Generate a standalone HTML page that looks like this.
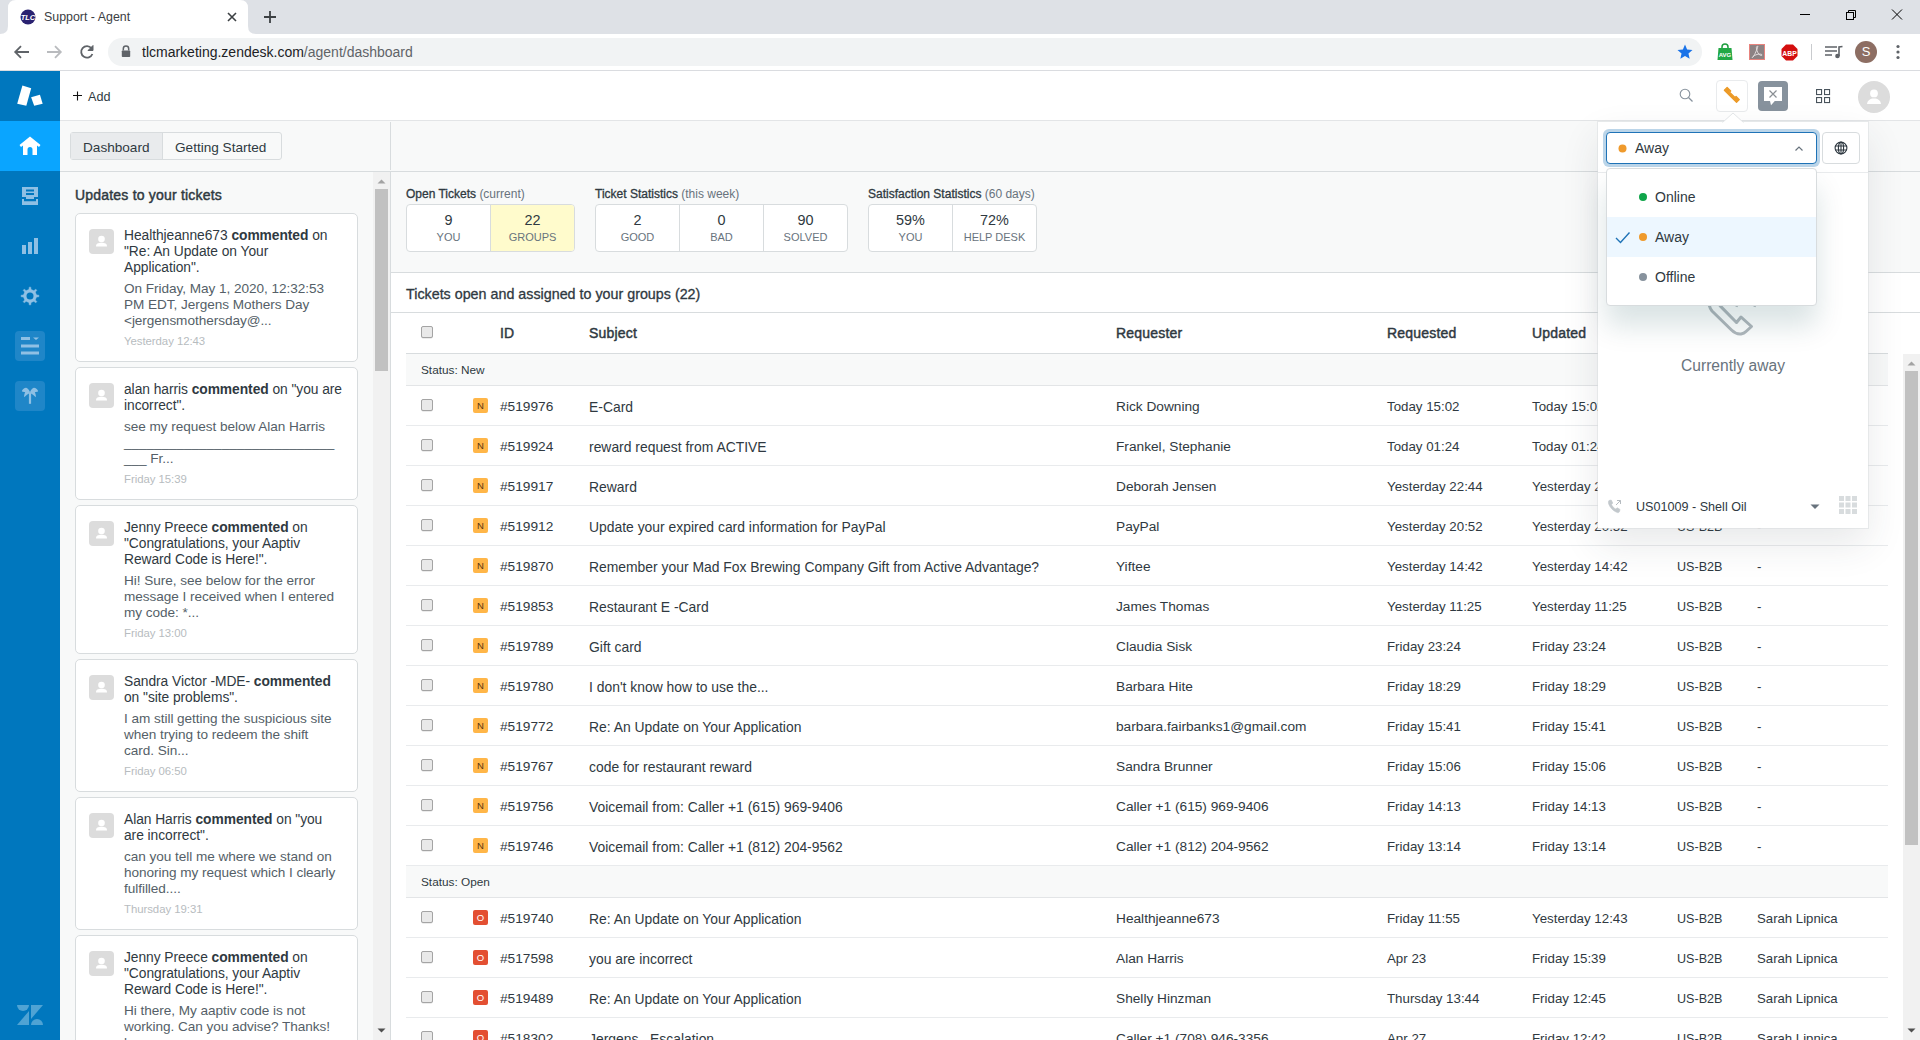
<!DOCTYPE html>
<html><head><meta charset="utf-8">
<style>
*{box-sizing:border-box;margin:0;padding:0}
html,body{width:1920px;height:1040px;overflow:hidden;background:#fff;font-family:"Liberation Sans",sans-serif;color:#2f3941}
.a{position:absolute}
/* browser chrome */
#tabbar{left:0;top:0;width:1920px;height:34px;background:#dee1e6}
#tab{left:8px;top:0;width:240px;height:34px;background:#fff;border-radius:8px 8px 0 0}
#addr{left:0;top:34px;width:1920px;height:37px;background:#fff;border-bottom:1px solid #dadce0}
#pill{left:108px;top:38px;width:1594px;height:28px;border-radius:14px;background:#f1f3f4}
/* zendesk */
#nav{left:0;top:71px;width:60px;height:969px;background:#0077be}
#home{left:0;top:121px;width:60px;height:50px;background:#0aa5ff}
#topbar{left:60px;top:71px;width:1860px;height:50px;background:#fff;border-bottom:1px solid #e3e5e7}
#sub{left:60px;top:121px;width:1860px;height:51px;background:#f8f9f9;border-bottom:1px solid #d8dcde}
#left{left:60px;top:172px;width:331px;height:868px;background:#f8f9f9;border-right:1px solid #d8dcde}
#main{left:391px;top:172px;width:1529px;height:868px;background:#fff}
.card{position:absolute;left:75px;width:283px;background:#fff;border:1px solid #d8dcde;border-radius:5px;padding:14px 10px 12px 48px}
.card .av{position:absolute;left:13px;top:15px;width:25px;height:25px;background:#dcdcdc;border-radius:4px}
.card .av svg{display:block}
.card .tx{font-size:13.8px;line-height:16px;color:#2f3941;white-space:nowrap;letter-spacing:-0.05px}
.card .tx b{font-weight:700}
.card .bd{margin-top:4.5px;color:#555f68;font-size:13.6px;line-height:16px}
.card .dt{margin-top:4.6px;color:#b7bcc0;font-size:11.4px;line-height:16px}
.lbl{font-size:12px;line-height:14px;color:#2f3941;white-space:nowrap;-webkit-text-stroke:0.3px #2f3941}
.lbl span{color:#68737d;-webkit-text-stroke:0}
.sbox{height:48px;border:1px solid #d8dcde;border-radius:4px;background:#fff;display:flex;overflow:hidden}
.sbox .cell{height:46px;border-right:1px solid #d8dcde;text-align:center;font-size:14.4px;line-height:16px;padding-top:7px;color:#2f3941}
.sbox .cell small{display:block;font-size:11px;line-height:16px;color:#68737d;margin-top:1px}
.th{top:325px;font-size:14px;line-height:16px;font-weight:400;color:#2f3941;white-space:nowrap;-webkit-text-stroke:0.45px #2f3941;letter-spacing:0.2px}
.cb{width:12px;height:12px;border:1px solid #a4a4a4;border-radius:2px;background:#e9e9e9;box-shadow:0 0.5px 0.5px rgba(0,0,0,0.15)}
.srow{left:406px;width:1482px;height:32px;background:#f8f9f9;border-bottom:1px solid #e3e5e7;padding:8px 0 0 15px;font-size:11.8px;line-height:16px;color:#2f3941}
.tr{left:406px;width:1482px;height:40px;border-bottom:1px solid #e9ebed}
.td{font-size:13.8px;line-height:16px;color:#2f3941;white-space:nowrap}
.badge{left:473px;width:15px;height:15px;border-radius:2px;font-size:9.5px;line-height:15px;text-align:center;font-weight:400}
.bn{background:#ffb648;color:#5a3512}
.bo{background:#e34f32;color:#fff}
</style></head><body>
<div id="tabbar" class="a"></div>
<div id="addr" class="a"></div>
<div id="pill" class="a"></div>

<!-- tab -->
<svg class="a" style="left:0;top:0" width="260" height="34">
 <path d="M0 34 Q8 34 8 26 V8 Q8 0 16 0 H240 Q248 0 248 8 V26 Q248 34 256 34 Z" fill="#fff"/>
</svg>
<svg class="a" style="left:20px;top:9px" width="16" height="16" viewBox="0 0 16 16"><circle cx="8" cy="8" r="7.5" fill="#2a2271"/><text x="8" y="10.8" font-family="Liberation Sans" font-size="7.5" font-weight="700" font-style="italic" fill="#fff" text-anchor="middle">TLC</text></svg>
<div class="a" style="left:44px;top:9px;font-size:12.4px;color:#3c4043;white-space:nowrap;line-height:16px">Support - Agent</div>
<svg class="a" style="left:227px;top:12px" width="10" height="10"><path d="M1 1L9 9M9 1L1 9" stroke="#3c4043" stroke-width="1.6"/></svg>
<svg class="a" style="left:263px;top:10px" width="14" height="14"><path d="M7 1V13M1 7H13" stroke="#3c4043" stroke-width="1.8"/></svg>
<svg class="a" style="left:1799px;top:9px" width="120" height="12">
 <path d="M1 5.5H11" stroke="#000" stroke-width="1"/>
 <rect x="47.5" y="3.5" width="7" height="7" fill="none" stroke="#000"/>
 <path d="M49.5 3.5V1.5H56.5V8.5H54.5" fill="none" stroke="#000"/>
 <path d="M93 0.5L103 10.5M103 0.5L93 10.5" stroke="#000"/>
</svg>
<!-- address row -->
<svg class="a" style="left:13px;top:44px" width="90" height="16" viewBox="0 0 90 16">
 <path d="M16 8H2.5M8 2.2L2.2 8L8 13.8" fill="none" stroke="#5f6368" stroke-width="1.8"/>
 <path d="M34 8H47.5M42 2.2L47.8 8L42 13.8" fill="none" stroke="#b9bbbe" stroke-width="1.8"/>
 <path d="M78.5 4.2A5.8 5.8 0 1 0 79.4 10" fill="none" stroke="#5f6368" stroke-width="1.8"/>
 <path d="M80 1.5V6.5H75Z" fill="#5f6368" stroke="#5f6368" stroke-width="1"/>
</svg>
<svg class="a" style="left:121px;top:45px" width="10" height="13" viewBox="0 0 10 13"><path d="M2.3 5.5V3.8A2.7 2.7 0 0 1 7.7 3.8V5.5" fill="none" stroke="#5f6368" stroke-width="1.5"/><rect x="0.8" y="5.5" width="8.4" height="6.6" rx="0.8" fill="#5f6368"/></svg>
<div class="a" style="left:142px;top:44px;font-size:14px;line-height:16px;white-space:nowrap;color:#202124">tlcmarketing.zendesk.com<span style="color:#5f6368">/agent/dashboard</span></div>
<svg class="a" style="left:1676px;top:43px" width="18" height="18" viewBox="0 0 24 24"><path d="M12 17.3l6.2 3.7-1.6-7 5.4-4.7-7.2-.6L12 2 9.2 8.6 2 9.3l5.4 4.7-1.6 7z" fill="#1a73e8"/></svg>
<svg class="a" style="left:1717px;top:43px" width="16" height="18" viewBox="0 0 16 18"><path d="M5 5V4A3 3 0 0 1 11 4V5" fill="none" stroke="#1e9e3e" stroke-width="1.5"/><path d="M1.5 5H14.5L15.5 17H0.5Z" fill="#22a845"/><text x="8" y="13.5" font-family="Liberation Sans" font-size="6" font-weight="700" fill="#fff" text-anchor="middle">AVG</text></svg>
<svg class="a" style="left:1749px;top:44px" width="16" height="16" viewBox="0 0 16 16"><rect x="0.5" y="0.5" width="15" height="15" fill="#8c8283" stroke="#e8837d"/><path d="M8 2.5C6.8 2.5 7.5 6 9 9C10.5 11.5 13 12 13 11S10 9.8 7 10.8S2.5 14 3.5 13.5S6.5 9 8 5S8.8 2.5 8 2.5Z" fill="none" stroke="#e9e3e3" stroke-width="0.9"/></svg>
<svg class="a" style="left:1781px;top:44px" width="17" height="17" viewBox="0 0 17 17"><path d="M5 0.5H12L16.5 5V12L12 16.5H5L0.5 12V5Z" fill="#d40e0e"/><text x="8.5" y="11.6" font-family="Liberation Sans" font-size="6.8" font-weight="700" fill="#fff" text-anchor="middle">ABP</text></svg>
<div class="a" style="left:1811px;top:44px;width:1px;height:16px;background:#c9cbce"></div>
<svg class="a" style="left:1825px;top:45px" width="18" height="14" viewBox="0 0 18 14"><path d="M0 2H12M0 6H12M0 10H7" stroke="#5f6368" stroke-width="1.6"/><path d="M14 11V2L17.5 1.5" fill="none" stroke="#5f6368" stroke-width="1.6"/><circle cx="12.5" cy="11" r="2.3" fill="#5f6368"/></svg>
<div class="a" style="left:1855px;top:41px;width:22px;height:22px;border-radius:11px;background:#8d6e63;color:#fff;font-size:13px;line-height:22px;text-align:center">S</div>
<svg class="a" style="left:1895px;top:44px" width="6" height="16"><circle cx="3" cy="2.5" r="1.6" fill="#5f6368"/><circle cx="3" cy="8" r="1.6" fill="#5f6368"/><circle cx="3" cy="13.5" r="1.6" fill="#5f6368"/></svg>


<div id="nav" class="a"></div>
<div id="home" class="a"></div>
<div id="topbar" class="a"></div>
<div id="sub" class="a"></div>
<div id="left" class="a"></div>
<div id="main" class="a"></div>


<!-- nav icons -->
<svg class="a" style="left:0;top:71px" width="60" height="50" viewBox="0 71 60 50">
 <path d="M22.4 85.5L31.2 88.3L26.3 105.8L17.2 103.7Z" fill="#fff"/>
 <path d="M31.1 97.3L39.9 94.8L42.7 103.7L34.2 105.8Z" fill="#fff"/>
</svg>
<svg class="a" style="left:19px;top:136px" width="22" height="20" viewBox="0 0 22 20">
 <path d="M11 0.5L21.5 9L20 11L18 9.6V19H13.5V13.5A2.5 2.5 0 0 0 8.5 13.5V19H4V9.6L2 11L0.5 9Z" fill="#fff"/>
</svg>
<svg class="a" style="left:22px;top:187px" width="16" height="18" viewBox="0 0 16 18">
 <path d="M0 0H16V10H0Z M4 2.5V4.5H12V2.5Z M4 6V8H12V6Z" fill="#8fc0e4" fill-rule="evenodd"/>
 <rect x="4" y="10" width="8" height="2" fill="#8fc0e4"/>
 <path d="M0 12H2V14.2H14V12H16V18H0Z" fill="#8fc0e4"/>
</svg>
<svg class="a" style="left:22px;top:238px" width="16" height="17" viewBox="0 0 16 17">
 <rect x="0" y="7" width="4" height="9" fill="#8fc0e4"/><rect x="6" y="4" width="4" height="12" fill="#8fc0e4"/><rect x="12" y="0" width="4" height="16" fill="#8fc0e4"/>
</svg>
<svg class="a" style="left:20px;top:286px" width="20" height="20" viewBox="-10 -10 20 20"><path d="M-2.45 -5.91 L-1.03 -6.52 L-0.78 -8.87 L0.78 -8.87 L1.03 -6.52 L2.45 -5.91 L3.88 -5.34 L5.72 -6.82 L6.82 -5.72 L5.34 -3.88 L5.91 -2.45 L6.52 -1.03 L8.87 -0.78 L8.87 0.78 L6.52 1.03 L5.91 2.45 L5.34 3.88 L6.82 5.72 L5.72 6.82 L3.88 5.34 L2.45 5.91 L1.03 6.52 L0.78 8.87 L-0.78 8.87 L-1.03 6.52 L-2.45 5.91 L-3.88 5.34 L-5.72 6.82 L-6.82 5.72 L-5.34 3.88 L-5.91 2.45 L-6.52 1.03 L-8.87 0.78 L-8.87 -0.78 L-6.52 -1.03 L-5.91 -2.45 L-5.34 -3.88 L-6.82 -5.72 L-5.72 -6.82 L-3.88 -5.34Z" fill="#8fc0e4" stroke="#8fc0e4" stroke-width="0.5" stroke-linejoin="round"/><circle r="3.5" fill="#0077be"/></svg>
<div class="a" style="left:15px;top:331px;width:30px;height:30px;border-radius:4px;background:#1f86c8"></div>
<svg class="a" style="left:21px;top:337px" width="18" height="18" viewBox="0 0 18 18">
 <rect x="0" y="0" width="9" height="3" fill="#8fc0e4"/><path d="M12 0.5H18L15 3Z" fill="#8fc0e4"/>
 <rect x="0" y="7.5" width="18" height="3" fill="#8fc0e4"/><rect x="0" y="14.5" width="18" height="3" fill="#8fc0e4"/>
</svg>
<div class="a" style="left:15px;top:381px;width:30px;height:30px;border-radius:4px;background:#1f86c8"></div>
<svg class="a" style="left:21px;top:386px" width="18" height="20" viewBox="0 0 18 20">
 <rect x="7.9" y="7" width="2.2" height="10.8" fill="#8fc0e4"/>
 <path d="M9 5.9C7.5 2.5 5.5 1.6 4.8 1.8C2.5 2.2 1 4 0.9 5.5L4.2 6.3C3.3 8 3 10 3.2 11.2C5 9.5 7 8 8.8 7Z" fill="#8fc0e4"/>
 <path d="M9 5.9C10.5 2.5 12.5 1.6 13.2 1.8C15.5 2.2 17 4 17.1 5.5L13.8 6.3C14.7 8 15 10 14.8 11.2C13 9.5 11 8 9.2 7Z" fill="#8fc0e4"/>
</svg>
<svg class="a" style="left:17px;top:1005px" width="26" height="20" viewBox="0 0 26 20">
 <g fill="#4fa3d4">
 <path d="M0 0H12A6 6 0 0 1 0 0Z"/>
 <path d="M0 20H12V6Z"/>
 <path d="M14 0H26L14 14Z"/>
 <path d="M14 20A6 6 0 0 1 26 20Z"/>
 </g>
</svg>
<!-- top bar -->
<svg class="a" style="left:73px;top:91px" width="10" height="10"><path d="M4.5 0.5V9.5M0 4.5H9" stroke="#111" stroke-width="1.1"/></svg>
<div class="a" style="left:88px;top:89px;font-size:12.6px;line-height:16px;color:#2f3941">Add</div>
<svg class="a" style="left:1679px;top:88px" width="15" height="15" viewBox="0 0 15 15"><circle cx="6" cy="6" r="4.8" fill="none" stroke="#87929d" stroke-width="1.1"/><path d="M9.5 9.5L13.5 13.5" stroke="#87929d" stroke-width="1.3"/></svg>
<div class="a" style="left:1716px;top:80px;width:32px;height:32px;border:1px solid #e9ebed;border-radius:4px;background:#fff"></div>
<svg class="a" style="left:1714px;top:78px" width="32" height="32" viewBox="0 0 32 32"><path transform="translate(16.24,18.48) rotate(45)" d="M-8.6 -0.3H8.6V-4.2H4.1V-2.6H-3.6V-4.2H-8.6Z" fill="#ec9a27" stroke="#ec9a27" stroke-width="1.3" stroke-linejoin="round"/></svg>
<div class="a" style="left:1758px;top:81px;width:30px;height:30px;border-radius:4px;background:#87929d"></div>
<svg class="a" style="left:1763px;top:86px" width="20" height="20" viewBox="0 0 20 20"><path d="M1 1H19V15H11.8L8 19.2L7 15H1Z" fill="#fff"/><path d="M6.5 4.5L13.5 11.5M13.5 4.5L6.5 11.5" stroke="#8a8f94" stroke-width="1.2"/></svg>
<svg class="a" style="left:1816px;top:89px" width="15" height="15" viewBox="0 0 15 15"><g fill="none" stroke="#49545c" stroke-width="1.1"><rect x="0.55" y="0.55" width="5" height="5"/><rect x="8.55" y="0.55" width="5" height="5"/><rect x="0.55" y="8.55" width="5" height="5"/><rect x="8.55" y="8.55" width="5" height="5"/></g></svg>
<div class="a" style="left:1858px;top:81px;width:32px;height:32px;border-radius:16px;background:#dcdcdc"></div>
<svg class="a" style="left:1864px;top:86px" width="20" height="20" viewBox="0 0 20 20"><circle cx="10" cy="7.4" r="3.9" fill="#fff"/><path d="M3 18C3.5 14.5 6 12.6 10 12.6S16.5 14.5 17 18Z" fill="#fff"/></svg>
<!-- subheader tabs -->
<div class="a" style="left:70px;top:132px;width:212px;height:28px;border:1px solid #d8dcde;border-radius:3px;background:#f8f9f9"></div>
<div class="a" style="left:71px;top:133px;width:92px;height:26px;background:#e9ebed;border-right:1px solid #d8dcde"></div>
<div class="a" style="left:83px;top:140px;font-size:13.6px;line-height:16px;color:#2f3941">Dashboard</div>
<div class="a" style="left:175px;top:140px;font-size:13.6px;line-height:16px;color:#2f3941">Getting Started</div>
<div class="a" style="left:390px;top:122px;width:1px;height:48px;background:#d8dcde"></div>


<div class="a" style="left:75px;top:186px;font-size:14px;line-height:18px;color:#2f3941;font-weight:400;letter-spacing:0.2px;-webkit-text-stroke:0.45px #2f3941">Updates to your tickets</div>
<div class="card" style="top:213px"><div class="av"><svg width="25" height="25" viewBox="0 0 25 25"><circle cx="12.5" cy="10" r="3.3" fill="#fff"/><path d="M7 17.5C7 14.5 9 13.8 12.5 13.8S18 14.5 18 17.5Z" fill="#fff"/></svg></div><div class="tx">Healthjeanne673 <b>commented</b> on<br>"Re: An Update on Your<br>Application".<div class="bd">On Friday, May 1, 2020, 12:32:53<br>PM EDT, Jergens Mothers Day<br>&lt;jergensmothersday@...</div><div class="dt">Yesterday 12:43</div></div></div>
<div class="card" style="top:367px"><div class="av"><svg width="25" height="25" viewBox="0 0 25 25"><circle cx="12.5" cy="10" r="3.3" fill="#fff"/><path d="M7 17.5C7 14.5 9 13.8 12.5 13.8S18 14.5 18 17.5Z" fill="#fff"/></svg></div><div class="tx">alan harris <b>commented</b> on "you are<br>incorrect".<div class="bd">see my request below Alan Harris<br>____________________________<br>___ Fr...</div><div class="dt">Friday 15:39</div></div></div>
<div class="card" style="top:505px"><div class="av"><svg width="25" height="25" viewBox="0 0 25 25"><circle cx="12.5" cy="10" r="3.3" fill="#fff"/><path d="M7 17.5C7 14.5 9 13.8 12.5 13.8S18 14.5 18 17.5Z" fill="#fff"/></svg></div><div class="tx">Jenny Preece <b>commented</b> on<br>"Congratulations, your Aaptiv<br>Reward Code is Here!".<div class="bd">Hi! Sure, see below for the error<br>message I received when I entered<br>my code: *...</div><div class="dt">Friday 13:00</div></div></div>
<div class="card" style="top:659px"><div class="av"><svg width="25" height="25" viewBox="0 0 25 25"><circle cx="12.5" cy="10" r="3.3" fill="#fff"/><path d="M7 17.5C7 14.5 9 13.8 12.5 13.8S18 14.5 18 17.5Z" fill="#fff"/></svg></div><div class="tx">Sandra Victor -MDE- <b>commented</b><br>on "site problems".<div class="bd">I am still getting the suspicious site<br>when trying to redeem the shift<br>card. Sin...</div><div class="dt">Friday 06:50</div></div></div>
<div class="card" style="top:797px"><div class="av"><svg width="25" height="25" viewBox="0 0 25 25"><circle cx="12.5" cy="10" r="3.3" fill="#fff"/><path d="M7 17.5C7 14.5 9 13.8 12.5 13.8S18 14.5 18 17.5Z" fill="#fff"/></svg></div><div class="tx">Alan Harris <b>commented</b> on "you<br>are incorrect".<div class="bd">can you tell me where we stand on<br>honoring my request which I clearly<br>fulfilled....</div><div class="dt">Thursday 19:31</div></div></div>
<div class="card" style="top:935px"><div class="av"><svg width="25" height="25" viewBox="0 0 25 25"><circle cx="12.5" cy="10" r="3.3" fill="#fff"/><path d="M7 17.5C7 14.5 9 13.8 12.5 13.8S18 14.5 18 17.5Z" fill="#fff"/></svg></div><div class="tx">Jenny Preece <b>commented</b> on<br>"Congratulations, your Aaptiv<br>Reward Code is Here!".<div class="bd">Hi there, My aaptiv code is not<br>working. Can you advise? Thanks!<br>l...</div><div class="dt">Thursday 11:02</div></div></div>

<div class="a" style="left:373px;top:172px;width:17px;height:868px;background:#f1f1f1"></div>
<div class="a" style="left:375px;top:189px;width:13px;height:182px;background:#c1c1c1"></div>
<svg class="a" style="left:373px;top:176px" width="17" height="10"><path d="M4.5 7.5L8.5 3.5L12.5 7.5Z" fill="#a3a3a3"/></svg>
<svg class="a" style="left:373px;top:1026px" width="17" height="10"><path d="M4.5 2.5L8.5 6.5L12.5 2.5Z" fill="#505050"/></svg>


<!-- stats -->
<div class="a" style="left:391px;top:172px;width:1529px;height:101px;background:#f8f9f9;border-bottom:1px solid #d8dcde"></div>
<div class="a lbl" style="left:406px;top:187px">Open Tickets <span>(current)</span></div>
<div class="a lbl" style="left:595px;top:187px">Ticket Statistics <span>(this week)</span></div>
<div class="a lbl" style="left:868px;top:187px">Satisfaction Statistics <span>(60 days)</span></div>
<div class="a sbox" style="left:406px;top:204px;width:169px">
 <div class="cell" style="width:84px">9<small>YOU</small></div><div class="cell" style="width:83px;background:#fffbcc;border-right:0">22<small>GROUPS</small></div>
</div>
<div class="a sbox" style="left:595px;top:204px;width:253px">
 <div class="cell" style="width:84px">2<small>GOOD</small></div><div class="cell" style="width:84px">0<small>BAD</small></div><div class="cell" style="width:83px;border-right:0">90<small>SOLVED</small></div>
</div>
<div class="a sbox" style="left:868px;top:204px;width:169px">
 <div class="cell" style="width:84px">59%<small>YOU</small></div><div class="cell" style="width:83px;border-right:0">72%<small>HELP DESK</small></div>
</div>
<div class="a" style="left:406px;top:285px;font-size:14.3px;line-height:18px;color:#2f3941;white-space:nowrap;-webkit-text-stroke:0.3px #2f3941">Tickets open and assigned to your groups (22)</div>
<div class="a" style="left:391px;top:312px;width:1529px;height:1px;background:#d8dcde"></div>
<!-- table header -->
<div class="a cb" style="left:421px;top:326px"></div>
<div class="a th" style="left:500px">ID</div>
<div class="a th" style="left:589px">Subject</div>
<div class="a th" style="left:1116px">Requester</div>
<div class="a th" style="left:1387px">Requested</div>
<div class="a th" style="left:1532px">Updated</div>
<div class="a th" style="left:1677px">Group</div>
<div class="a th" style="left:1757px">Assignee</div>
<div class="a" style="left:406px;top:353px;width:1482px;height:1px;background:#d8dcde"></div>
<div class="a srow" style="top:354px">Status: New</div>
<div class="a tr" style="top:386px"></div><div class="a cb" style="left:421px;top:399px"></div><div class="a badge bn" style="top:398px">N</div><div class="a td" style="left:500px;top:399px;font-size:13.7px">#519976</div><div class="a td" style="left:589px;top:399px;font-size:13.9px">E-Card</div><div class="a td" style="left:1116px;top:399px;font-size:13.7px">Rick Downing</div><div class="a td" style="left:1387px;top:399px;font-size:13.3px">Today 15:02</div><div class="a td" style="left:1532px;top:399px;font-size:13.3px">Today 15:02</div><div class="a td" style="left:1677px;top:399px;font-size:12.6px">US-B2B</div><div class="a td" style="left:1757px;top:399px;font-size:13.2px">-</div>
<div class="a tr" style="top:426px"></div><div class="a cb" style="left:421px;top:439px"></div><div class="a badge bn" style="top:438px">N</div><div class="a td" style="left:500px;top:439px;font-size:13.7px">#519924</div><div class="a td" style="left:589px;top:439px;font-size:13.9px">reward request from ACTIVE</div><div class="a td" style="left:1116px;top:439px;font-size:13.7px">Frankel, Stephanie</div><div class="a td" style="left:1387px;top:439px;font-size:13.3px">Today 01:24</div><div class="a td" style="left:1532px;top:439px;font-size:13.3px">Today 01:24</div><div class="a td" style="left:1677px;top:439px;font-size:12.6px">US-B2B</div><div class="a td" style="left:1757px;top:439px;font-size:13.2px">-</div>
<div class="a tr" style="top:466px"></div><div class="a cb" style="left:421px;top:479px"></div><div class="a badge bn" style="top:478px">N</div><div class="a td" style="left:500px;top:479px;font-size:13.7px">#519917</div><div class="a td" style="left:589px;top:479px;font-size:13.9px">Reward</div><div class="a td" style="left:1116px;top:479px;font-size:13.7px">Deborah Jensen</div><div class="a td" style="left:1387px;top:479px;font-size:13.3px">Yesterday 22:44</div><div class="a td" style="left:1532px;top:479px;font-size:13.3px">Yesterday 22:44</div><div class="a td" style="left:1677px;top:479px;font-size:12.6px">US-B2B</div><div class="a td" style="left:1757px;top:479px;font-size:13.2px">-</div>
<div class="a tr" style="top:506px"></div><div class="a cb" style="left:421px;top:519px"></div><div class="a badge bn" style="top:518px">N</div><div class="a td" style="left:500px;top:519px;font-size:13.7px">#519912</div><div class="a td" style="left:589px;top:519px;font-size:13.9px">Update your expired card information for PayPal</div><div class="a td" style="left:1116px;top:519px;font-size:13.7px">PayPal</div><div class="a td" style="left:1387px;top:519px;font-size:13.3px">Yesterday 20:52</div><div class="a td" style="left:1532px;top:519px;font-size:13.3px">Yesterday 20:52</div><div class="a td" style="left:1677px;top:519px;font-size:12.6px">US-B2B</div><div class="a td" style="left:1757px;top:519px;font-size:13.2px">-</div>
<div class="a tr" style="top:546px"></div><div class="a cb" style="left:421px;top:559px"></div><div class="a badge bn" style="top:558px">N</div><div class="a td" style="left:500px;top:559px;font-size:13.7px">#519870</div><div class="a td" style="left:589px;top:559px;font-size:13.9px">Remember your Mad Fox Brewing Company Gift from Active Advantage?</div><div class="a td" style="left:1116px;top:559px;font-size:13.7px">Yiftee</div><div class="a td" style="left:1387px;top:559px;font-size:13.3px">Yesterday 14:42</div><div class="a td" style="left:1532px;top:559px;font-size:13.3px">Yesterday 14:42</div><div class="a td" style="left:1677px;top:559px;font-size:12.6px">US-B2B</div><div class="a td" style="left:1757px;top:559px;font-size:13.2px">-</div>
<div class="a tr" style="top:586px"></div><div class="a cb" style="left:421px;top:599px"></div><div class="a badge bn" style="top:598px">N</div><div class="a td" style="left:500px;top:599px;font-size:13.7px">#519853</div><div class="a td" style="left:589px;top:599px;font-size:13.9px">Restaurant E -Card</div><div class="a td" style="left:1116px;top:599px;font-size:13.7px">James Thomas</div><div class="a td" style="left:1387px;top:599px;font-size:13.3px">Yesterday 11:25</div><div class="a td" style="left:1532px;top:599px;font-size:13.3px">Yesterday 11:25</div><div class="a td" style="left:1677px;top:599px;font-size:12.6px">US-B2B</div><div class="a td" style="left:1757px;top:599px;font-size:13.2px">-</div>
<div class="a tr" style="top:626px"></div><div class="a cb" style="left:421px;top:639px"></div><div class="a badge bn" style="top:638px">N</div><div class="a td" style="left:500px;top:639px;font-size:13.7px">#519789</div><div class="a td" style="left:589px;top:639px;font-size:13.9px">Gift card</div><div class="a td" style="left:1116px;top:639px;font-size:13.7px">Claudia Sisk</div><div class="a td" style="left:1387px;top:639px;font-size:13.3px">Friday 23:24</div><div class="a td" style="left:1532px;top:639px;font-size:13.3px">Friday 23:24</div><div class="a td" style="left:1677px;top:639px;font-size:12.6px">US-B2B</div><div class="a td" style="left:1757px;top:639px;font-size:13.2px">-</div>
<div class="a tr" style="top:666px"></div><div class="a cb" style="left:421px;top:679px"></div><div class="a badge bn" style="top:678px">N</div><div class="a td" style="left:500px;top:679px;font-size:13.7px">#519780</div><div class="a td" style="left:589px;top:679px;font-size:13.9px">I don't know how to use the...</div><div class="a td" style="left:1116px;top:679px;font-size:13.7px">Barbara Hite</div><div class="a td" style="left:1387px;top:679px;font-size:13.3px">Friday 18:29</div><div class="a td" style="left:1532px;top:679px;font-size:13.3px">Friday 18:29</div><div class="a td" style="left:1677px;top:679px;font-size:12.6px">US-B2B</div><div class="a td" style="left:1757px;top:679px;font-size:13.2px">-</div>
<div class="a tr" style="top:706px"></div><div class="a cb" style="left:421px;top:719px"></div><div class="a badge bn" style="top:718px">N</div><div class="a td" style="left:500px;top:719px;font-size:13.7px">#519772</div><div class="a td" style="left:589px;top:719px;font-size:13.9px">Re: An Update on Your Application</div><div class="a td" style="left:1116px;top:719px;font-size:13.7px">barbara.fairbanks1@gmail.com</div><div class="a td" style="left:1387px;top:719px;font-size:13.3px">Friday 15:41</div><div class="a td" style="left:1532px;top:719px;font-size:13.3px">Friday 15:41</div><div class="a td" style="left:1677px;top:719px;font-size:12.6px">US-B2B</div><div class="a td" style="left:1757px;top:719px;font-size:13.2px">-</div>
<div class="a tr" style="top:746px"></div><div class="a cb" style="left:421px;top:759px"></div><div class="a badge bn" style="top:758px">N</div><div class="a td" style="left:500px;top:759px;font-size:13.7px">#519767</div><div class="a td" style="left:589px;top:759px;font-size:13.9px">code for restaurant reward</div><div class="a td" style="left:1116px;top:759px;font-size:13.7px">Sandra Brunner</div><div class="a td" style="left:1387px;top:759px;font-size:13.3px">Friday 15:06</div><div class="a td" style="left:1532px;top:759px;font-size:13.3px">Friday 15:06</div><div class="a td" style="left:1677px;top:759px;font-size:12.6px">US-B2B</div><div class="a td" style="left:1757px;top:759px;font-size:13.2px">-</div>
<div class="a tr" style="top:786px"></div><div class="a cb" style="left:421px;top:799px"></div><div class="a badge bn" style="top:798px">N</div><div class="a td" style="left:500px;top:799px;font-size:13.7px">#519756</div><div class="a td" style="left:589px;top:799px;font-size:13.9px">Voicemail from: Caller +1 (615) 969-9406</div><div class="a td" style="left:1116px;top:799px;font-size:13.7px">Caller +1 (615) 969-9406</div><div class="a td" style="left:1387px;top:799px;font-size:13.3px">Friday 14:13</div><div class="a td" style="left:1532px;top:799px;font-size:13.3px">Friday 14:13</div><div class="a td" style="left:1677px;top:799px;font-size:12.6px">US-B2B</div><div class="a td" style="left:1757px;top:799px;font-size:13.2px">-</div>
<div class="a tr" style="top:826px"></div><div class="a cb" style="left:421px;top:839px"></div><div class="a badge bn" style="top:838px">N</div><div class="a td" style="left:500px;top:839px;font-size:13.7px">#519746</div><div class="a td" style="left:589px;top:839px;font-size:13.9px">Voicemail from: Caller +1 (812) 204-9562</div><div class="a td" style="left:1116px;top:839px;font-size:13.7px">Caller +1 (812) 204-9562</div><div class="a td" style="left:1387px;top:839px;font-size:13.3px">Friday 13:14</div><div class="a td" style="left:1532px;top:839px;font-size:13.3px">Friday 13:14</div><div class="a td" style="left:1677px;top:839px;font-size:12.6px">US-B2B</div><div class="a td" style="left:1757px;top:839px;font-size:13.2px">-</div>
<div class="a srow" style="top:866px">Status: Open</div>
<div class="a tr" style="top:898px"></div><div class="a cb" style="left:421px;top:911px"></div><div class="a badge bo" style="top:910px">O</div><div class="a td" style="left:500px;top:911px;font-size:13.7px">#519740</div><div class="a td" style="left:589px;top:911px;font-size:13.9px">Re: An Update on Your Application</div><div class="a td" style="left:1116px;top:911px;font-size:13.7px">Healthjeanne673</div><div class="a td" style="left:1387px;top:911px;font-size:13.3px">Friday 11:55</div><div class="a td" style="left:1532px;top:911px;font-size:13.3px">Yesterday 12:43</div><div class="a td" style="left:1677px;top:911px;font-size:12.6px">US-B2B</div><div class="a td" style="left:1757px;top:911px;font-size:13.2px">Sarah Lipnica</div>
<div class="a tr" style="top:938px"></div><div class="a cb" style="left:421px;top:951px"></div><div class="a badge bo" style="top:950px">O</div><div class="a td" style="left:500px;top:951px;font-size:13.7px">#517598</div><div class="a td" style="left:589px;top:951px;font-size:13.9px">you are incorrect</div><div class="a td" style="left:1116px;top:951px;font-size:13.7px">Alan Harris</div><div class="a td" style="left:1387px;top:951px;font-size:13.3px">Apr 23</div><div class="a td" style="left:1532px;top:951px;font-size:13.3px">Friday 15:39</div><div class="a td" style="left:1677px;top:951px;font-size:12.6px">US-B2B</div><div class="a td" style="left:1757px;top:951px;font-size:13.2px">Sarah Lipnica</div>
<div class="a tr" style="top:978px"></div><div class="a cb" style="left:421px;top:991px"></div><div class="a badge bo" style="top:990px">O</div><div class="a td" style="left:500px;top:991px;font-size:13.7px">#519489</div><div class="a td" style="left:589px;top:991px;font-size:13.9px">Re: An Update on Your Application</div><div class="a td" style="left:1116px;top:991px;font-size:13.7px">Shelly Hinzman</div><div class="a td" style="left:1387px;top:991px;font-size:13.3px">Thursday 13:44</div><div class="a td" style="left:1532px;top:991px;font-size:13.3px">Friday 12:45</div><div class="a td" style="left:1677px;top:991px;font-size:12.6px">US-B2B</div><div class="a td" style="left:1757px;top:991px;font-size:13.2px">Sarah Lipnica</div>
<div class="a tr" style="top:1018px"></div><div class="a cb" style="left:421px;top:1031px"></div><div class="a badge bo" style="top:1030px">O</div><div class="a td" style="left:500px;top:1031px;font-size:13.7px">#518302</div><div class="a td" style="left:589px;top:1031px;font-size:13.9px">Jergens_ Escalation</div><div class="a td" style="left:1116px;top:1031px;font-size:13.7px">Caller +1 (708) 946-3356</div><div class="a td" style="left:1387px;top:1031px;font-size:13.3px">Apr 27</div><div class="a td" style="left:1532px;top:1031px;font-size:13.3px">Friday 12:42</div><div class="a td" style="left:1677px;top:1031px;font-size:12.6px">US-B2B</div><div class="a td" style="left:1757px;top:1031px;font-size:13.2px">Sarah Lipnica</div>

<div class="a" style="left:1903px;top:354px;width:17px;height:686px;background:#f1f1f1"></div>
<div class="a" style="left:1905px;top:371px;width:13px;height:474px;background:#c1c1c1"></div>
<svg class="a" style="left:1903px;top:358px" width="17" height="10"><path d="M4.5 7.5L8.5 3.5L12.5 7.5Z" fill="#a3a3a3"/></svg>
<svg class="a" style="left:1903px;top:1026px" width="17" height="10"><path d="M4.5 2.5L8.5 6.5L12.5 2.5Z" fill="#505050"/></svg>


<!-- popup -->
<div class="a" style="left:1598px;top:122px;width:270px;height:406px;background:#fff;box-shadow:0 0 0 1px rgba(216,220,222,0.5),0 16px 36px rgba(47,57,65,0.11)"></div>
<svg class="a" style="left:1722px;top:112px" width="22" height="12"><path d="M0 11L11 1L22 11" fill="#fff" stroke="#e2e5e7" stroke-width="1"/><rect x="0" y="10.5" width="22" height="2" fill="#fff"/></svg>
<div class="a" style="left:1598px;top:172px;width:270px;height:1px;background:#e9ebed"></div>
<div class="a" style="left:1603px;top:129px;width:217px;height:38px;border-radius:6px;background:rgba(31,115,183,0.3)"></div>
<div class="a" style="left:1606px;top:132px;width:211px;height:32px;border:1.5px solid #1f73b7;border-radius:4px;background:#fff"></div>
<svg class="a" style="left:1618px;top:144px" width="9" height="9"><circle cx="4.5" cy="4.5" r="4" fill="#ef9a2c"/></svg>
<div class="a" style="left:1635px;top:140px;font-size:14px;line-height:16px;color:#2f3941">Away</div>
<svg class="a" style="left:1794px;top:145px" width="10" height="7"><path d="M1.5 5.5L5 2L8.5 5.5" fill="none" stroke="#68737d" stroke-width="1.2"/></svg>
<div class="a" style="left:1822px;top:132px;width:38px;height:32px;border:1px solid #d8dcde;border-radius:4px;background:#fff"></div>
<svg class="a" style="left:1834px;top:141px" width="14" height="14" viewBox="0 0 14 14"><g fill="none" stroke="#2f3941" stroke-width="1.1"><circle cx="7" cy="7" r="5.9"/><ellipse cx="7" cy="7" rx="2.6" ry="5.9"/><path d="M1.2 5H12.8M1.2 9H12.8M7 1.1V12.9"/></g></svg>
<!-- big phone outline -->
<svg class="a" style="left:1690px;top:290px" width="80" height="50" viewBox="0 0 80 50">
 <path d="M18.5 8Q18.5 17 22 21L41.5 40Q46 44.5 51 44Q54 43.5 56 41.5L61.5 36.5L51 27L46.5 32.5L30.4 16.1L25 10" fill="none" stroke="#b1b8bd" stroke-width="3" stroke-linejoin="round"/>
 <path d="M44 14L48 16M62 14L66 16" stroke="#b1b8bd" stroke-width="3"/>
</svg>
<!-- dropdown -->
<div class="a" style="left:1606px;top:168px;width:211px;height:138px;background:#fff;border:1px solid #d8dcde;border-radius:4px;box-shadow:0 20px 28px rgba(4,68,77,0.15)"></div>
<svg class="a" style="left:1638px;top:192px" width="10" height="10"><circle cx="5" cy="5" r="4" fill="#10a54a"/></svg>
<div class="a" style="left:1655px;top:189px;font-size:14px;line-height:16px;color:#2f3941">Online</div>
<div class="a" style="left:1607px;top:217px;width:209px;height:40px;background:#edf7ff"></div>
<svg class="a" style="left:1614px;top:230px" width="18" height="15"><path d="M2 8L6.5 12.5L15.5 2.5" fill="none" stroke="#1f73b7" stroke-width="1.4"/></svg>
<svg class="a" style="left:1638px;top:232px" width="10" height="10"><circle cx="5" cy="5" r="4" fill="#ef9a2c"/></svg>
<div class="a" style="left:1655px;top:229px;font-size:14px;line-height:16px;color:#2f3941">Away</div>
<svg class="a" style="left:1638px;top:272px" width="10" height="10"><circle cx="5" cy="5" r="4" fill="#87929d"/></svg>
<div class="a" style="left:1655px;top:269px;font-size:14px;line-height:16px;color:#2f3941">Offline</div>
<div class="a" style="left:1598px;top:356px;width:270px;text-align:center;font-size:15.6px;line-height:20px;color:#68737d">Currently away</div>
<svg class="a" style="left:1606px;top:498px" width="17" height="17" viewBox="0 0 17 17"><path d="M3 2.5L5.2 2L6.8 5L5.5 6.6C6.2 8.4 8 10.2 9.8 11L11.2 9.8L14 11.4L13.5 13.6C13.2 14.4 12.2 14.9 11.4 14.6C7.4 13.2 4 9.8 2.6 5.8C2.3 4.6 2.3 3 3 2.5Z" fill="#c2c8cc" stroke="#c2c8cc" stroke-width="0.6"/><path d="M10 7L14.5 2.5M11 2.5H14.5V6" fill="none" stroke="#b5bbc0" stroke-width="1"/></svg>
<div class="a" style="left:1636px;top:499px;font-size:12.6px;line-height:16px;color:#2f3941;white-space:nowrap">US01009 - Shell Oil</div>
<svg class="a" style="left:1809px;top:503px" width="12" height="8"><path d="M1.5 1.5H10.5L6 6Z" fill="#68737d"/></svg>
<svg class="a" style="left:1839px;top:496px" width="18" height="18" viewBox="0 0 18 18"><g fill="#d8dcde"><rect x="0" y="0" width="5" height="5"/><rect x="6.5" y="0" width="5" height="5"/><rect x="13" y="0" width="5" height="5"/><rect x="0" y="6.5" width="5" height="5"/><rect x="6.5" y="6.5" width="5" height="5"/><rect x="13" y="6.5" width="5" height="5"/><rect x="0" y="13" width="5" height="5"/><rect x="6.5" y="13" width="5" height="5"/><rect x="13" y="13" width="5" height="5"/></g></svg>

</body></html>
